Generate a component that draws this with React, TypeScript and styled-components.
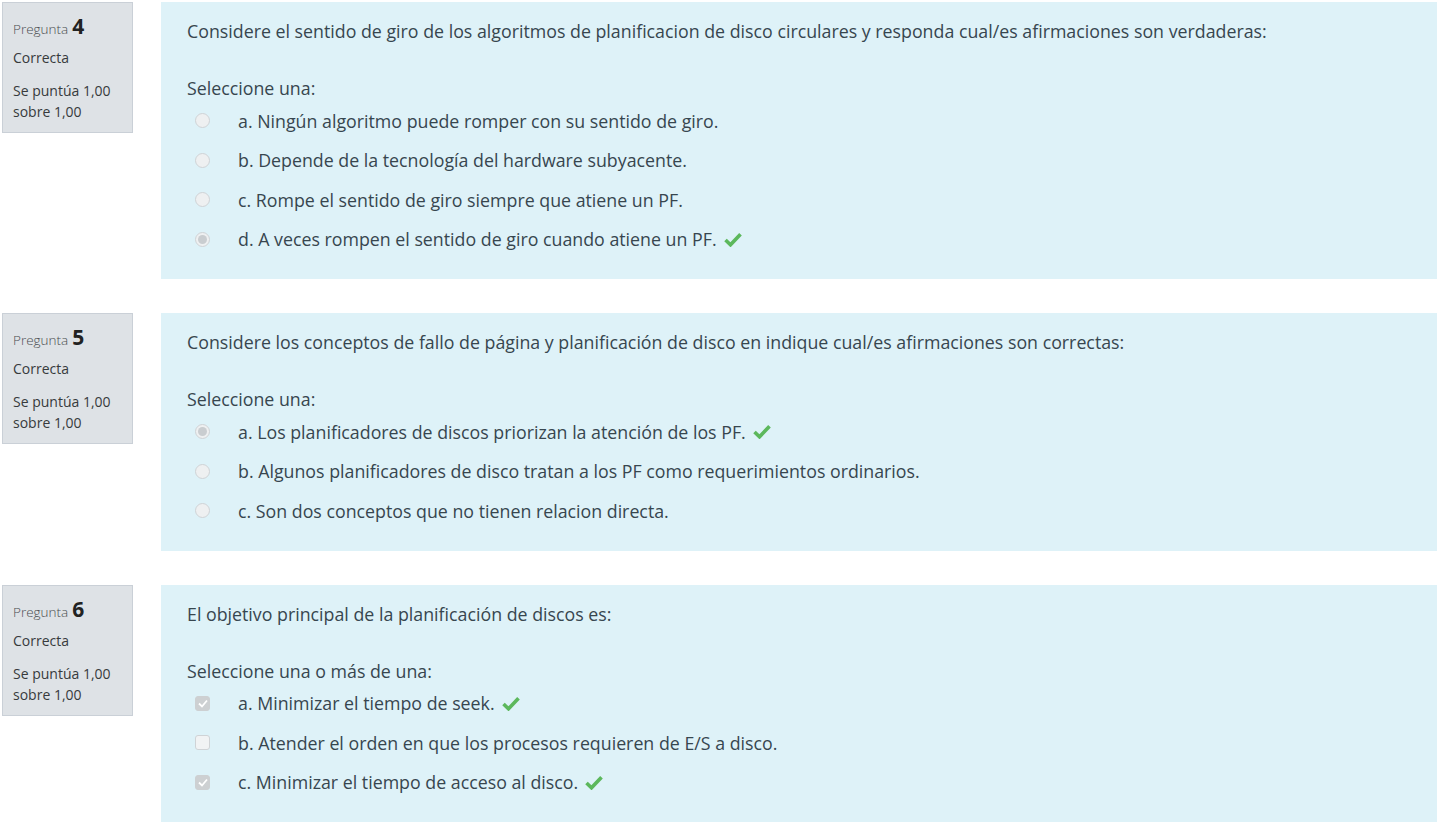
import React from "react";
import styled, { createGlobalStyle } from "styled-components";

const GlobalStyle = createGlobalStyle`
  html, body { margin: 0; padding: 0; background: #ffffff; }
  body { font-family: "Open Sans", "Noto Sans", sans-serif; color: #373a3c; }
`;

const Page = styled.div`
  padding: 2px 0 0 2px;
  display: flex;
  flex-direction: column;
  gap: 34px;
`;

const Question = styled.div`
  display: flex;
  align-items: flex-start;
  gap: 28px;
`;

const Info = styled.div`
  box-sizing: border-box;
  width: 131px;
  height: 131px;
  flex: none;
  background: #dee2e6;
  border: 1px solid #cad0d7;
  padding: 9px 10px;
  font-size: 14px;
  color: #373a3c;
`;

const QNo = styled.div`
  font-size: 13.5px;
  font-weight: 300;
  color: #4a4d50;
  line-height: 28px;
  height: 28px;
  display: flex;
  align-items: baseline;
  gap: 4px;
`;

const QNum = styled.span`
  font-size: 21px;
  font-weight: 700;
  color: #222;
`;

const State = styled.div`
  line-height: 20px;
  margin-top: 8px;
`;

const Grade = styled.div`
  line-height: 21px;
  margin-top: 12px;
`;

const Formulation = styled.div`
  flex: 1;
  background: #def2f8;
  padding: 17px 26px 20px;
  color: #37464f;
  font-size: 17.8px;
  line-height: 24px;
`;

const QText = styled.div`
  margin-bottom: 33px;
  white-space: nowrap;
`;

const Prompt = styled.div`
  margin-bottom: 1px;
`;

const Option = styled.div`
  display: flex;
  align-items: center;
  height: 39.5px;
  padding-left: 8px;
`;

const Radio = styled.span<{ $checked?: boolean }>`
  box-sizing: border-box;
  width: 15px;
  height: 15px;
  border-radius: 50%;
  border: 1px solid #cfd3d6;
  background: #eef0f1;
  flex: none;
  display: flex;
  align-items: center;
  justify-content: center;
  margin-right: 28px;
  &::after {
    content: "";
    display: ${(p) => (p.$checked ? "block" : "none")};
    width: 9px;
    height: 9px;
    border-radius: 50%;
    background: #c9cdd0;
  }
`;

const Box = styled.span<{ $checked?: boolean }>`
  box-sizing: border-box;
  width: 15px;
  height: 15px;
  border-radius: 3px;
  border: 1px solid ${(p) => (p.$checked ? "#cdd0d2" : "#cfd3d6")};
  background: ${(p) => (p.$checked ? "#cdd0d2" : "#f1f3f4")};
  flex: none;
  display: flex;
  align-items: center;
  justify-content: center;
  margin-right: 28px;
`;

const Check = styled.svg`
  margin-left: 7px;
  flex: none;
`;

const GreenCheck = () => (
  <Check width="18" height="15" viewBox="0 0 18 15">
    <path d="M1.5 8 L6.5 12.8 L16.5 2.2" fill="none" stroke="#5cb85c" strokeWidth="3.6" strokeLinejoin="miter" />
  </Check>
);

const WhiteTick = () => (
  <svg width="10" height="9" viewBox="0 0 10 9">
    <path d="M1 4.5 L4 7.5 L9 1.5" fill="none" stroke="#ffffff" strokeWidth="1.8" />
  </svg>
);

type Opt = { text: string; checked?: boolean; correct?: boolean };
type Q = { num: number; text: string; prompt: string; multi?: boolean; options: Opt[] };

const questions: Q[] = [
  {
    num: 4,
    text: "Considere el sentido de giro de los algoritmos de planificacion de disco circulares y responda cual/es afirmaciones son verdaderas:",
    prompt: "Seleccione una:",
    options: [
      { text: "a. Ningún algoritmo puede romper con su sentido de giro." },
      { text: "b. Depende de la tecnología del hardware subyacente." },
      { text: "c. Rompe el sentido de giro siempre que atiene un PF." },
      { text: "d. A veces rompen el sentido de giro cuando atiene un PF.", checked: true, correct: true },
    ],
  },
  {
    num: 5,
    text: "Considere los conceptos de fallo de página y planificación de disco en indique cual/es afirmaciones son correctas:",
    prompt: "Seleccione una:",
    options: [
      { text: "a. Los planificadores de discos priorizan la atención de los PF.", checked: true, correct: true },
      { text: "b. Algunos planificadores de disco tratan a los PF como requerimientos ordinarios." },
      { text: "c. Son dos conceptos que no tienen relacion directa." },
    ],
  },
  {
    num: 6,
    text: "El objetivo principal de la planificación de discos es:",
    prompt: "Seleccione una o más de una:",
    multi: true,
    options: [
      { text: "a. Minimizar el tiempo de seek.", checked: true, correct: true },
      { text: "b. Atender el orden en que los procesos requieren de E/S a disco." },
      { text: "c. Minimizar el tiempo de acceso al disco.", checked: true, correct: true },
    ],
  },
];

export default function App() {
  return (
    <>
      <GlobalStyle />
      <Page>
        {questions.map((q) => (
          <Question key={q.num}>
            <Info>
              <QNo>
                Pregunta <QNum>{q.num}</QNum>
              </QNo>
              <State>Correcta</State>
              <Grade>
                Se puntúa 1,00
                <br />
                sobre 1,00
              </Grade>
            </Info>
            <Formulation>
              <QText>{q.text}</QText>
              <Prompt>{q.prompt}</Prompt>
              {q.options.map((o) => (
                <Option key={o.text}>
                  {q.multi ? (
                    <Box $checked={o.checked}>{o.checked && <WhiteTick />}</Box>
                  ) : (
                    <Radio $checked={o.checked} />
                  )}
                  <span>{o.text}</span>
                  {o.correct && <GreenCheck />}
                </Option>
              ))}
            </Formulation>
          </Question>
        ))}
      </Page>
    </>
  );
}
